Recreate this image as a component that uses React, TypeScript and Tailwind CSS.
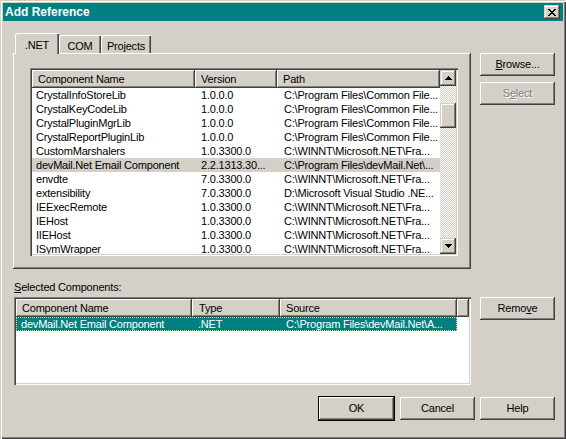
import React from 'react';

// Win2000 bevels
const raised = 'shadow-[inset_-1px_-1px_#404040,inset_1px_1px_#ffffff,inset_-2px_-2px_#808080]';
const raisedSoft = 'shadow-[inset_-1px_-1px_#404040,inset_1px_1px_#d4d0c8,inset_-2px_-2px_#808080,inset_2px_2px_#ffffff]';
const sunken = 'shadow-[inset_1px_1px_#808080,inset_2px_2px_#404040,inset_-1px_-1px_#ffffff,inset_-2px_-2px_#d4d0c8]';

const refs = [
  ['CrystalInfoStoreLib', '1.0.0.0', 'C:\\Program Files\\Common File...'],
  ['CrystalKeyCodeLib', '1.0.0.0', 'C:\\Program Files\\Common File...'],
  ['CrystalPluginMgrLib', '1.0.0.0', 'C:\\Program Files\\Common File...'],
  ['CrystalReportPluginLib', '1.0.0.0', 'C:\\Program Files\\Common File...'],
  ['CustomMarshalers', '1.0.3300.0', 'C:\\WINNT\\Microsoft.NET\\Fra...'],
  ['devMail.Net Email Component', '2.2.1313.30...', 'C:\\Program Files\\devMail.Net\\...'],
  ['envdte', '7.0.3300.0', 'C:\\WINNT\\Microsoft.NET\\Fra...'],
  ['extensibility', '7.0.3300.0', 'D:\\Microsoft Visual Studio .NE...'],
  ['IEExecRemote', '1.0.3300.0', 'C:\\WINNT\\Microsoft.NET\\Fra...'],
  ['IEHost', '1.0.3300.0', 'C:\\WINNT\\Microsoft.NET\\Fra...'],
  ['IIEHost', '1.0.3300.0', 'C:\\WINNT\\Microsoft.NET\\Fra...'],
  ['ISymWrapper', '1.0.3300.0', 'C:\\WINNT\\Microsoft.NET\\Fra...'],
];

function Button({ children, disabled }: { children: React.ReactNode; disabled?: boolean }) {
  return (
    <div
      className={`w-[75px] h-[23px] flex items-center justify-center bg-[#d4d0c8] ${raised} ${
        disabled ? 'text-[#808080] [text-shadow:1px_1px_0_#ffffff]' : 'text-black'
      }`}
    >
      {children}
    </div>
  );
}

function HeaderCell({ w, label, pl = 'pl-[6px]' }: { w: string; label?: string; pl?: string }) {
  return (
    <div className={`${w} h-full shrink-0 flex items-center ${pl} bg-[#d4d0c8] ${raised} whitespace-nowrap overflow-hidden`}>
      {label}
    </div>
  );
}

function Arrow({ down }: { down?: boolean }) {
  return (
    <svg width="7" height="4" viewBox="0 0 7 4" shapeRendering="crispEdges" className={down ? 'rotate-180' : ''}>
      <path d="M3 0h1v1h1v1h1v1h1v1H0V3h1V2h1V1h1z" fill="#000" />
    </svg>
  );
}

function CloseGlyph() {
  const rows = ['11000011', '01100110', '00111100', '00011000', '00111100', '01100110', '11000011'];
  return (
    <svg width="8" height="7" viewBox="0 0 8 7" shapeRendering="crispEdges">
      {rows.map((r, y) =>
        r.split('').map((c, x) => (c === '1' ? <rect key={`${x}-${y}`} x={x} y={y} width="1" height="1" fill="#000" /> : null))
      )}
    </svg>
  );
}

export default function App() {
  return (
    <div
      className="w-[566px] h-[439px] bg-[#d4d0c8] p-[3px] flex flex-col text-[11px] tracking-[-0.2px] text-black shadow-[inset_1px_1px_#d4d0c8,inset_2px_2px_#ffffff,inset_-1px_-1px_#404040,inset_-2px_-2px_#808080]"
      style={{ fontFamily: '"Liberation Sans", Arial, sans-serif' }}
    >
      {/* title bar */}
      <div className="h-[18px] bg-[#008080] flex items-center justify-between pl-[2px] pr-[3px]">
        <span className="text-white font-bold text-[12px] tracking-normal leading-none">Add Reference</span>
        <div className={`w-[16px] h-[14px] bg-[#d4d0c8] flex items-center justify-center ${raisedSoft}`}>
          <CloseGlyph />
        </div>
      </div>

      <div className="flex-1 flex flex-col pl-[10px] pr-[8px] pt-[12px]">
        {/* tabs + buttons */}
        <div className="flex gap-[9px]">
          <div className="w-[458px] flex flex-col">
            <div className="h-[20px] flex items-end pl-[2px]">
              <div className="relative z-10 w-[44px] h-[21px] -mb-[1px] bg-[#d4d0c8] flex items-start justify-center pt-[4px] rounded-tl-[2px] shadow-[inset_1px_1px_#ffffff,inset_-1px_0_#404040,inset_-2px_0_#808080]">
                .NET
              </div>
              <div className="w-[42px] h-[18px] bg-[#d4d0c8] flex items-start justify-center pt-[3px] rounded-tl-[2px] shadow-[inset_1px_1px_#ffffff,inset_-1px_0_#404040,inset_-2px_0_#808080]">
                COM
              </div>
              <div className="w-[50px] h-[18px] bg-[#d4d0c8] flex items-start justify-center pt-[3px] rounded-tl-[2px] shadow-[inset_1px_1px_#ffffff,inset_-1px_0_#404040,inset_-2px_0_#808080]">
                Projects
              </div>
            </div>
            <div className={`h-[216px] pt-[15px] pl-[17px] ${raised}`}>
              <div className={`w-[428px] h-[188px] bg-white p-[2px] ${sunken}`}>
                <div className="h-full flex overflow-hidden">
                  <div className="flex-1 flex flex-col overflow-hidden">
                    <div className="h-[18px] flex shrink-0">
                      <HeaderCell w="w-[163px]" label="Component Name" />
                      <HeaderCell w="w-[82px]" label="Version" />
                      <HeaderCell w="w-[163px]" label="Path" />
                    </div>
                    {refs.map(([name, ver, path]) => (
                      <div
                        key={name}
                        className={`h-[14px] shrink-0 flex leading-[14px] whitespace-nowrap ${
                          name.startsWith('devMail') ? 'bg-[#d4d0c8]' : ''
                        }`}
                      >
                        <div className="w-[163px] pl-[4px] overflow-hidden">{name}</div>
                        <div className="w-[82px] pl-[6px] overflow-hidden">{ver}</div>
                        <div className="w-[163px] pl-[7px] overflow-hidden">{path}</div>
                      </div>
                    ))}
                  </div>
                  {/* scrollbar */}
                  <div className="w-[16px] flex flex-col bg-[repeating-conic-gradient(#d4d0c8_0%_25%,#ffffff_0%_50%)] bg-[length:2px_2px]">
                    <div className={`h-[16px] bg-[#d4d0c8] flex items-center justify-center ${raisedSoft}`}>
                      <Arrow />
                    </div>
                    <div className="flex-1">
                      <div className={`mt-[17px] h-[25px] bg-[#d4d0c8] ${raisedSoft}`} />
                    </div>
                    <div className={`h-[16px] bg-[#d4d0c8] flex items-center justify-center ${raisedSoft}`}>
                      <Arrow down />
                    </div>
                  </div>
                </div>
              </div>
            </div>
          </div>
          <div className="w-[75px] pt-[20px] flex flex-col gap-[6px]">
            <Button>
              <span>
                <u>B</u>rowse...
              </span>
            </Button>
            <Button disabled>
              <span>
                S<u>e</u>lect
              </span>
            </Button>
          </div>
        </div>

        {/* selected components */}
        <div className="flex gap-[9px] mt-[12px]">
          <div className="w-[458px] flex flex-col">
            <div className="h-[13px] leading-[13px] pl-[1px]">
              <u>S</u>elected Components:
            </div>
            <div className={`mt-[3px] ml-[1px] w-[457px] h-[88px] bg-white p-[2px] ${sunken}`}>
              <div className="h-[18px] flex">
                <HeaderCell w="w-[176px]" label="Component Name" />
                <HeaderCell w="w-[88px]" label="Type" pl="pl-[7px]" />
                <HeaderCell w="w-[177px]" label="Source" />
                <HeaderCell w="flex-1" />
              </div>
              <div className="w-[441px] h-[14px] leading-[12px] flex bg-[#008080] text-white border border-dotted border-[#d8d890] whitespace-nowrap">
                <div className="w-[175px] pl-[4px] overflow-hidden">devMail.Net Email Component</div>
                <div className="w-[88px] pl-[6px]">.NET</div>
                <div className="flex-1 pl-[6px] overflow-hidden">C:\Program Files\devMail.Net\A...</div>
              </div>
            </div>
          </div>
          <div className="w-[75px] pt-[16px]">
            <Button>
              <span>
                Remo<u>v</u>e
              </span>
            </Button>
          </div>
        </div>

        {/* bottom buttons */}
        <div className="mt-[11px] flex justify-end items-center gap-[5px]">
          <div className="border border-black">
            <Button>OK</Button>
          </div>
          <Button>Cancel</Button>
          <Button>Help</Button>
        </div>
      </div>
    </div>
  );
}
